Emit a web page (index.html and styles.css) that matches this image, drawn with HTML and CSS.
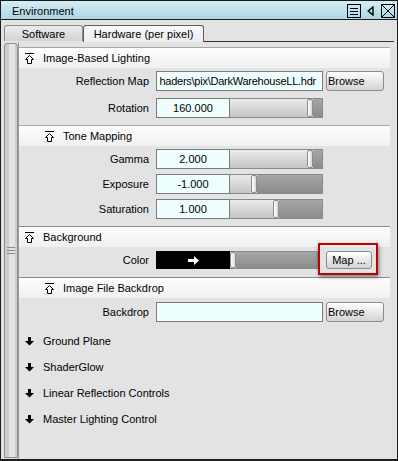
FILE: index.html
```html
<!DOCTYPE html>
<html>
<head>
<meta charset="utf-8">
<link rel="stylesheet" href="styles.css">
</head>
<body>
<div class="window">
  <div class="titlebar">
    <span class="title">Environment</span>
    <svg class="ic-menu" width="14" height="14" viewBox="0 0 14 14"><rect x="0.5" y="0.5" width="13" height="13" fill="none" stroke="#000"/><path d="M3 4.5H11M3 7.5H11M3 10.5H11" stroke="#000"/></svg>
    <svg class="ic-tri" width="7" height="10" viewBox="0 0 7 10"><path d="M6 1 L1.2 5 L6 9 Z" fill="none" stroke="#000" stroke-width="1.4"/></svg>
    <svg class="ic-close" width="14" height="14" viewBox="0 0 14 14"><rect x="0.5" y="0.5" width="13" height="13" fill="none" stroke="#000"/><path d="M1 1L13 13M13 1L1 13" stroke="#000"/></svg>
  </div>
  <div class="tabs">
    <div class="tab tab-sw">Software</div>
    <div class="tab tab-hw">Hardware (per pixel)</div>
    <div class="tab-fill"></div>
  </div>
  <div class="body">
    <div class="strip"><div class="grip"></div></div>
    <div class="content">
      <div class="hdr">
        <svg class="ic-up" width="9" height="11" viewBox="0 0 9 11"><path d="M0 0.5H9" stroke="#000"/><path d="M4.5 2.5 L8.5 6.5 H6.5 V10.5 H2.5 V6.5 H0.5 Z" fill="#fff" stroke="#000"/></svg>
        <span>Image-Based Lighting</span>
      </div>
      <div class="rows">
        <div class="row">
          <span class="lbl">Reflection Map</span>
          <div class="input path"><span class="path-text">haders\pix\DarkWarehouseLL.hdr</span></div>
          <div class="btn btn-browse">Browse</div>
        </div>
        <div class="row">
          <span class="lbl">Rotation</span>
          <div class="input num">160.000</div>
          <div class="slider"><div class="fill" style="width:77px"></div><div class="handle"></div><div class="rest"></div></div>
        </div>
      </div>

      <div class="hdr sub">
        <svg class="ic-up" width="9" height="11" viewBox="0 0 9 11"><path d="M0 0.5H9" stroke="#000"/><path d="M4.5 2.5 L8.5 6.5 H6.5 V10.5 H2.5 V6.5 H0.5 Z" fill="#fff" stroke="#000"/></svg>
        <span>Tone Mapping</span>
      </div>
      <div class="rows tight">
        <div class="row">
          <span class="lbl">Gamma</span>
          <div class="input num">2.000</div>
          <div class="slider"><div class="fill" style="width:77px"></div><div class="handle"></div><div class="rest"></div></div>
        </div>
        <div class="row">
          <span class="lbl">Exposure</span>
          <div class="input num">-1.000</div>
          <div class="slider"><div class="fill" style="width:21px"></div><div class="handle"></div><div class="rest"></div></div>
        </div>
        <div class="row">
          <span class="lbl">Saturation</span>
          <div class="input num">1.000</div>
          <div class="slider"><div class="fill" style="width:43px"></div><div class="handle"></div><div class="rest"></div></div>
        </div>
      </div>

      <div class="hdr dark">
        <svg class="ic-up" width="9" height="11" viewBox="0 0 9 11"><path d="M0 0.5H9" stroke="#000"/><path d="M4.5 2.5 L8.5 6.5 H6.5 V10.5 H2.5 V6.5 H0.5 Z" fill="#fff" stroke="#000"/></svg>
        <span>Background</span>
      </div>
      <div class="rows color-rows">
        <div class="row row-short">
          <span class="lbl">Color</span>
          <div class="swatch"><svg width="11" height="9" viewBox="0 0 11 9"><path d="M0 3 H6 V0 L11 4.5 L6 9 V6 H0 Z" fill="#fff"/></svg></div>
          <div class="slider slider-short"><div class="handle"></div><div class="rest"></div></div>
          <div class="map-wrap">
            <div class="btn btn-map">Map ...</div>
            <div class="highlight"></div>
          </div>
        </div>
      </div>

      <div class="hdr sub dark">
        <svg class="ic-up" width="9" height="11" viewBox="0 0 9 11"><path d="M0 0.5H9" stroke="#000"/><path d="M4.5 2.5 L8.5 6.5 H6.5 V10.5 H2.5 V6.5 H0.5 Z" fill="#fff" stroke="#000"/></svg>
        <span>Image File Backdrop</span>
      </div>
      <div class="rows backdrop-rows">
        <div class="row">
          <span class="lbl">Backdrop</span>
          <div class="input path"></div>
          <div class="btn btn-browse">Browse</div>
        </div>
      </div>

      <div class="collapsed">
        <div class="crow"><svg width="9" height="9" viewBox="0 0 9 9"><path d="M3 0 H6 V4 H9 L4.5 8.5 L0 4 H3 Z" fill="#000"/></svg><span>Ground Plane</span></div>
        <div class="crow"><svg width="9" height="9" viewBox="0 0 9 9"><path d="M3 0 H6 V4 H9 L4.5 8.5 L0 4 H3 Z" fill="#000"/></svg><span>ShaderGlow</span></div>
        <div class="crow"><svg width="9" height="9" viewBox="0 0 9 9"><path d="M3 0 H6 V4 H9 L4.5 8.5 L0 4 H3 Z" fill="#000"/></svg><span>Linear Reflection Controls</span></div>
        <div class="crow"><svg width="9" height="9" viewBox="0 0 9 9"><path d="M3 0 H6 V4 H9 L4.5 8.5 L0 4 H3 Z" fill="#000"/></svg><span>Master Lighting Control</span></div>
      </div>
    </div>
  </div>
</div>
</body>
</html>
```
FILE: styles.css
```css
* { box-sizing: border-box; }
html, body { margin: 0; padding: 0; }
body {
  font-family: "Liberation Sans", Arial, sans-serif;
  font-size: 11px;
  color: #000;
  background: #e3e3e3;
}
.window {
  width: 398px;
  height: 461px;
  border: 1px solid #1c1c1c;
  border-bottom-width: 2px;
  background: #e3e3e3;
  display: flex;
  flex-direction: column;
  overflow: hidden;
}
.titlebar {
  flex: none;
  height: 19px;
  border-bottom: 1px solid #1f1f1f;
  background: linear-gradient(#d5eef5, #acd7e4);
  display: flex;
  align-items: center;
  padding: 1px 2px 0 11px;
}
.title { flex: 1; }
.ic-menu { margin-right: 6px; }
.ic-tri { margin-right: 7px; }

.tabs {
  flex: none;
  height: 22px;
  display: flex;
  align-items: flex-end;
  padding: 0 3px;
}
.tab {
  display: flex;
  align-items: center;
  justify-content: center;
  border: 1px solid #8c8c8c;
  border-bottom: none;
  border-radius: 3px 3px 0 0;
}
.tab-sw {
  width: 79px;
  height: 16px;
  margin-bottom: 1px;
  background: linear-gradient(#ececec, #d3d3d3);
}
.tab-hw {
  width: 121px;
  height: 17px;
  border-color: #5e5e5e;
  background: linear-gradient(#f9f9f9, #ededed);
}
.tab-fill {
  flex: 1;
  border-bottom: 1px solid #333;
}

.body {
  flex: 1;
  display: flex;
  min-height: 0;
}
.strip {
  flex: none;
  width: 14px;
  margin: 1px 0 1px 3px;
  border: 1px solid #8e8e8e;
  border-radius: 3px 3px 0 0;
  background: linear-gradient(to right, #cdcdcd 0 4px, #e4e4e4 4px 10px, #cdcdcd 10px);
  display: flex;
  align-items: center;
  justify-content: center;
}
.grip {
  width: 8px;
  height: 7px;
  background: repeating-linear-gradient(#8a8a8a 0 1px, transparent 1px 3px);
}
.content {
  flex: 1;
  border-left: 1px solid #9c9c9c;
  padding: 5px 7px 0 0;
}

.hdr {
  height: 21px;
  border-top: 1px solid #a6a6a6;
  background: linear-gradient(#fdfdfd, #f0f0f0);
  display: flex;
  align-items: center;
  padding-left: 6px;
}
.hdr.dark { border-top-color: #8c8c8c; }
.hdr.sub { padding-left: 26px; }
.ic-up { margin-right: 9px; flex: none; }

.rows {
  display: flex;
  flex-direction: column;
  gap: 7px;
  padding: 3px 0 7px;
}
.rows.tight { gap: 5px; }
.color-rows { padding: 4px 0 8px; }
.backdrop-rows { padding: 4px 0 0; }
.row {
  display: flex;
  align-items: center;
  height: 20px;
}
.row-short { height: 18px; }
.lbl {
  width: 130px;
  text-align: right;
  margin-right: 7px;
  flex: none;
}

.input {
  height: 20px;
  border: 1px solid #7b7b7b;
  background: #effefe;
  display: flex;
  align-items: center;
  overflow: hidden;
  white-space: nowrap;
  flex: none;
}
.input.path {
  width: 167px;
  justify-content: flex-end;
  padding-right: 6px;
}
.path-text {
  letter-spacing: -0.25px;
  flex: none;
}
.input.num {
  width: 74px;
  justify-content: center;
}

.slider {
  flex: none;
  width: 93px;
  height: 20px;
  display: flex;
  border: 1px solid #8a8a8a;
  border-left: none;
}
.slider-short {
  width: 88px;
  height: 18px;
}
.fill {
  flex: none;
  background: linear-gradient(#ebebeb, #c5c5c5);
}
.handle {
  flex: none;
  width: 6px;
  border: 1px solid #8c8c8c;
  border-radius: 2px;
  background: linear-gradient(to right, #ffffff, #d9d9d9);
}
.rest {
  flex: 1;
  background: linear-gradient(#a6a6a6, #8b8b8b);
}

.swatch {
  flex: none;
  width: 74px;
  height: 18px;
  background: #000;
  display: flex;
  align-items: center;
  justify-content: center;
}
.swatch svg { display: block; }

.btn {
  flex: none;
  border: 1px solid #8c8c8c;
  border-radius: 3px;
  background: linear-gradient(#fefefe, #d3d3d3);
  display: flex;
  align-items: center;
  margin-left: 3px;
}
.btn-browse {
  width: 58px;
  height: 20px;
  padding-left: 1px;
}
.map-wrap {
  position: relative;
  margin-left: 8px;
  flex: none;
}
.btn-map {
  margin-left: 0;
  width: 46px;
  height: 18px;
  justify-content: center;
}
.highlight {
  position: absolute;
  left: -8px;
  top: -8px;
  width: 60px;
  height: 32px;
  border: 2px solid #c00000;
  box-shadow: 1px 2px 4px rgba(0, 0, 0, 0.45);
  pointer-events: none;
}

.collapsed { padding-top: 6px; }
.crow {
  height: 26px;
  display: flex;
  align-items: center;
  padding-left: 6px;
}
.crow svg { margin-right: 9px; flex: none; }
```
